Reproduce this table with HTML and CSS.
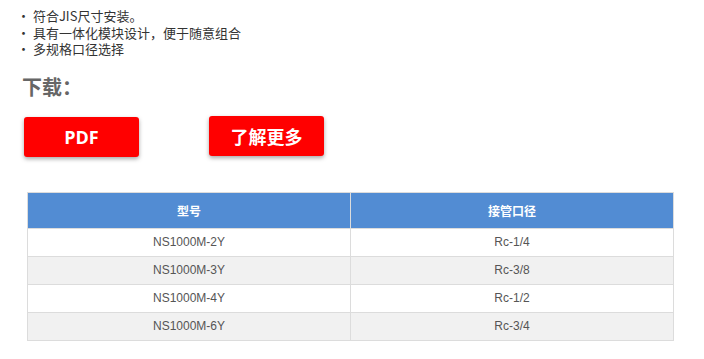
FILE: index.html
```html
<!DOCTYPE html>
<html>
<head>
<meta charset="utf-8">
<link rel="stylesheet" href="styles.css">
</head>
<body>
<div class="page">
  <ul class="features">
    <li>· 符合JIS尺寸安装。</li>
    <li>· 具有一体化模块设计，便于随意组合</li>
    <li>· 多规格口径选择</li>
  </ul>
  <h2 class="dl-title">下载：</h2>
  <div class="buttons">
    <a class="btn btn-pdf">PDF</a>
    <a class="btn btn-more">了解更多</a>
  </div>
  <table class="spec">
    <thead>
      <tr><th>型号</th><th>接管口径</th></tr>
    </thead>
    <tbody>
      <tr><td>NS1000M-2Y</td><td>Rc-1/4</td></tr>
      <tr class="alt"><td>NS1000M-3Y</td><td>Rc-3/8</td></tr>
      <tr><td>NS1000M-4Y</td><td>Rc-1/2</td></tr>
      <tr class="alt"><td>NS1000M-6Y</td><td>Rc-3/4</td></tr>
    </tbody>
  </table>
</div>
</body>
</html>
```
FILE: styles.css
```css
* { box-sizing: border-box; }
body {
  margin: 0;
  background: #fff;
  font-family: "Noto Sans CJK SC", "Liberation Sans", sans-serif;
  color: #333;
}
.page {
  padding: 8px 0 0 17px;
}
.features {
  list-style: none;
  margin: 0;
  padding: 0;
  font-size: 13px;
  line-height: 16.5px;
}
.dl-title {
  margin: 15px 0 0 5px;
  font-size: 20px;
  line-height: 28px;
  font-weight: bold;
  color: #666;
}
.buttons {
  display: flex;
  margin: 16px 0 0 7px;
  gap: 70px;
  align-items: flex-start;
}
.btn {
  display: flex;
  align-items: center;
  justify-content: center;
  width: 115px;
  height: 40px;
  background: #ff0000;
  color: #fff;
  font-weight: bold;
  font-size: 18px;
  border-radius: 3px;
  box-shadow: 0 2px 4px rgba(0,0,0,0.35);
}
.btn-pdf {
  font-family: "Open Sans", "Liberation Sans", sans-serif;
  font-size: 18px;
}
.btn-more {
  margin-top: -1px;
}
.spec {
  margin: 35px 0 0 10px;
  width: 647px;
  border-collapse: collapse;
  font-family: "Liberation Sans", "Noto Sans CJK SC", sans-serif;
  font-size: 12px;
  text-align: center;
}
.spec th, .spec td {
  border: 1px solid #dcdcdc;
  width: 50%;
}
.spec th {
  background: #528cd3;
  color: #fff;
  height: 36px;
  font-weight: bold;
  font-family: "Noto Sans CJK SC", sans-serif;
  font-size: 12px;
}
.spec td {
  height: 28px;
  color: #555;
  background: #fff;
}
.spec tr.alt td {
  background: #f1f1f1;
}
```
